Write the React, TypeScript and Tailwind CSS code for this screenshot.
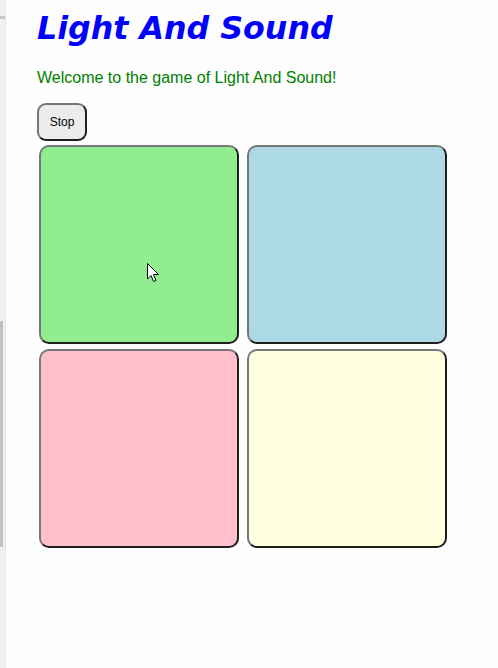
import React from "react";

const tile =
  "relative w-[200px] h-[199px] rounded-[10px] border-2 border-t-[#777777] border-l-[#777777] border-b-[#1e1e1e] border-r-[#1e1e1e]";

export default function App() {
  return (
    <div className="flex w-[498px] h-[668px] bg-[#fefefe] overflow-hidden">
      <div className="relative w-[6px] h-[668px] bg-[#f0f0f0] border-r border-[#e4e4e4] shrink-0">
        <div className="absolute left-0 top-[16px] w-[5px] h-[3px] bg-[#c8c8c8]" />
        <div className="absolute left-0 top-[321px] w-[3px] h-[226px] bg-[#c1c1c1]" />
      </div>
      <div className="flex flex-col pl-[31px]">
        <h1
          className="mt-[10px] text-[31.7px] leading-[37px] font-bold italic text-[#0000ff]"
          style={{ fontFamily: '"DejaVu Sans", Verdana, sans-serif' }}
        >
          Light And Sound
        </h1>
        <p
          className="mt-[22px] text-[16px] leading-[18px] text-[#008000]"
          style={{ fontFamily: '"Liberation Sans", Arial, sans-serif' }}
        >
          Welcome to the game of Light And Sound!
        </p>
        <div className="mt-[16px]">
          <button
            className="w-[50px] h-[38px] rounded-[9px] bg-[#ececec] border-2 border-t-[#777777] border-l-[#777777] border-b-[#1e1e1e] border-r-[#1e1e1e] text-[12px] text-black"
            style={{ fontFamily: '"Liberation Sans", Arial, sans-serif' }}
          >
            Stop
          </button>
        </div>
        <div className="mt-[4px] ml-[2px] flex flex-col gap-[5px]">
          <div className="flex gap-[8px]">
            <div className={`${tile} bg-[#90ee90]`}>
              <svg
                className="absolute left-[106px] top-[116px]"
                width="13"
                height="20"
                viewBox="0 0 13 20"
              >
                <path
                  d="M0.5 0.5 L0.5 16 L4 12.5 L6.5 18.5 L9 17.5 L6.5 11.5 L11.5 11.5 Z"
                  fill="#ffffff"
                  stroke="#000000"
                  strokeWidth="1"
                  strokeLinejoin="miter"
                />
              </svg>
            </div>
            <div className={`${tile} bg-[#add8e6]`} />
          </div>
          <div className="flex gap-[8px]">
            <div className={`${tile} bg-[#ffc0cb]`} />
            <div className={`${tile} bg-[#ffffe0]`} />
          </div>
        </div>
      </div>
    </div>
  );
}
